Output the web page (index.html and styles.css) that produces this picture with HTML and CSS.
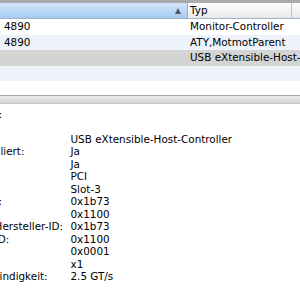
FILE: index.html
```html
<!DOCTYPE html>
<html lang="de">

<head>
    <meta charset="UTF-8">
    <link rel="stylesheet" href="styles.css">
</head>

<body>
    <div class="profiler">
        <div class="device-list">
            <div class="list-head">
                <div class="head-cell col-name sorted">
                    <span class="sort-arrow"></span>
                </div>
                <div class="head-cell col-type">Typ</div>
                <div class="head-cell col-rest"></div>
            </div>
            <div class="list-row">
                <div class="col-name">4890</div>
                <div class="col-type">Monitor-Controller</div>
            </div>
            <div class="list-row stripe">
                <div class="col-name">4890</div>
                <div class="col-type">ATY,MotmotParent</div>
            </div>
            <div class="list-row selected">
                <div class="col-name"></div>
                <div class="col-type">USB eXtensible-Host-Controller</div>
            </div>
            <div class="list-row stripe">
                <div class="col-name"></div>
                <div class="col-type"></div>
            </div>
            <div class="list-row">
                <div class="col-name"></div>
                <div class="col-type"></div>
            </div>
        </div>

        <div class="splitter"></div>

        <div class="details">
            <div class="details-title">pci1b73,1100:</div>
            <div class="props">
                <div class="prop-key"></div><div class="prop-value"></div>
                <div class="prop-key">Typ:</div><div class="prop-value">USB eXtensible-Host-Controller</div>
                <div class="prop-key">Treiber installiert:</div><div class="prop-value">Ja</div>
                <div class="prop-key">MSI:</div><div class="prop-value">Ja</div>
                <div class="prop-key">Bus:</div><div class="prop-value">PCI</div>
                <div class="prop-key">Steckplatz:</div><div class="prop-value">Slot-3</div>
                <div class="prop-key">Hersteller-ID:</div><div class="prop-value">0x1b73</div>
                <div class="prop-key">Geräte-ID:</div><div class="prop-value">0x1100</div>
                <div class="prop-key">Subsystem-Hersteller-ID:</div><div class="prop-value">0x1b73</div>
                <div class="prop-key">Subsystem-ID:</div><div class="prop-value">0x1100</div>
                <div class="prop-key">Versions-ID:</div><div class="prop-value">0x0001</div>
                <div class="prop-key">Link-Breite:</div><div class="prop-value">x1</div>
                <div class="prop-key">Link-Geschwindigkeit:</div><div class="prop-value">2.5 GT/s</div>
            </div>
        </div>
    </div>
</body>

</html>
```

FILE: styles.css
```css
body {
    margin: 0;
    width: 300px;
    height: 300px;
    overflow: hidden;
    background-color: #fff;
    font-family: "DejaVu Sans", sans-serif;
    font-size: 10.4px;
    color: #000;
}

.profiler {
    width: 300px;
}

/* upper list */
.device-list {
    height: 92px;
    overflow: hidden;
    border-top: 3px solid #ababab;
}

.list-head {
    display: flex;
    height: 15px;
    border-bottom: 1px solid #9fb3cc;
}

.head-cell {
    line-height: 15px;
    background: linear-gradient(#fdfdfd, #e9e9e9);
}

.head-cell.sorted {
    position: relative;
    background: linear-gradient(#d2e5f9, #a6caf1);
    border-right: 1px solid #8eaed3;
}

.sort-arrow {
    position: absolute;
    right: 6px;
    top: 5px;
    border-left: 3px solid transparent;
    border-right: 3px solid transparent;
    border-bottom: 6px solid #4a5566;
}

.list-head .col-type {
    border-right: 1px solid #c3c3c3;
}

.col-name {
    width: 183px;
    padding-left: 4px;
    flex-shrink: 0;
}

.col-type {
    width: 101px;
    padding-left: 2px;
    flex-shrink: 0;
    white-space: nowrap;
}

.col-rest {
    flex: 1;
}

.list-row {
    display: flex;
    height: 15.5px;
    line-height: 15.5px;
    white-space: nowrap;
}

.list-row .col-type {
    width: 120px;
    padding-left: 3px;
}

.stripe {
    background-color: #eef3fb;
}

.selected {
    background-color: #d4d4d4;
}

/* divider between list and details */
.splitter {
    height: 7px;
    border-top: 1px solid #a4a4a4;
    border-bottom: 1px solid #c6c6c6;
    background: linear-gradient(#ececec, #d3d3d3);
}

/* details pane */
.details {
    padding-top: 3.5px;
    margin-left: -66.5px;
    line-height: 12.5px;
    white-space: nowrap;
}

.details-title {
    margin-left: -6px;
}

.props {
    display: grid;
    grid-template-columns: 137px auto;
}

.prop-key,
.prop-value {
    height: 12.5px;
}
```
